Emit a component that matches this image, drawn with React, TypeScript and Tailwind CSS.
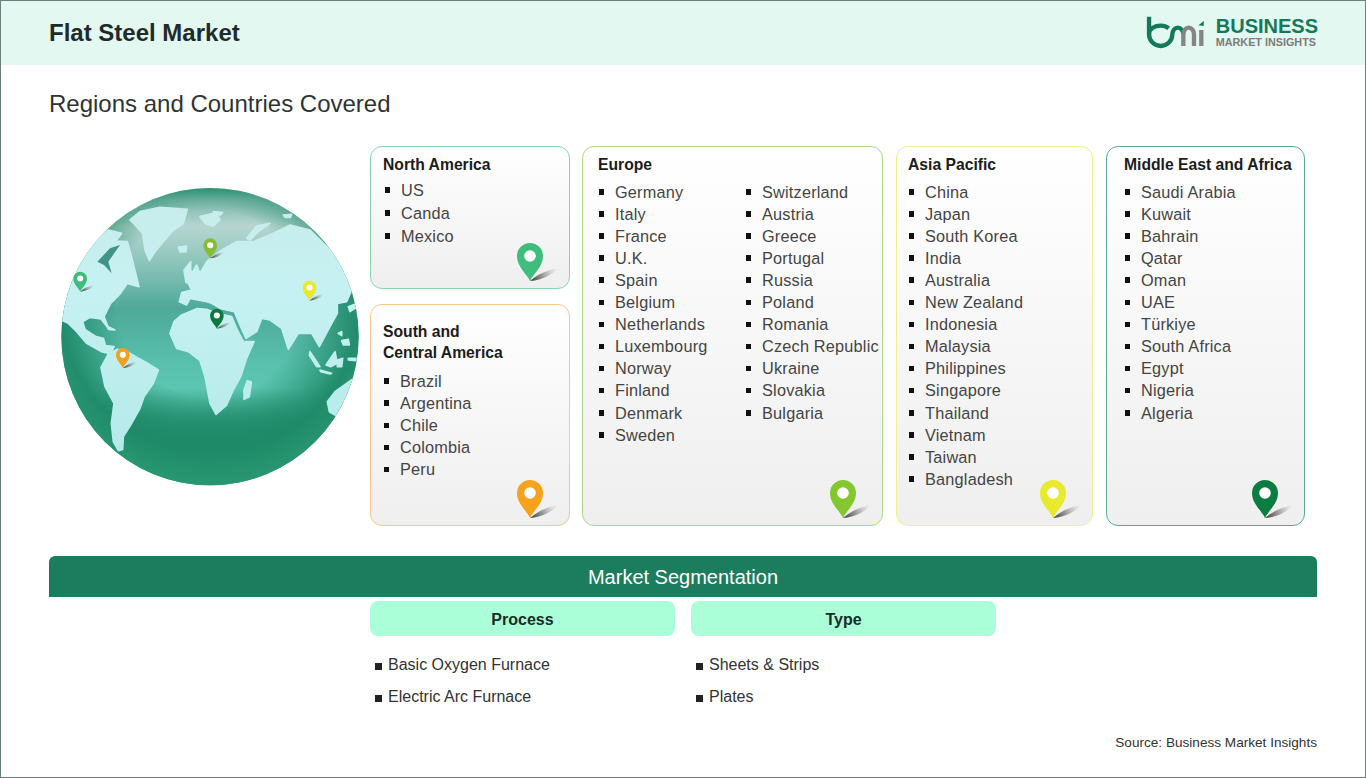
import React from "react";

function PinShape({ color, id }: { color: string; id: string }) {
  return (
    <>
      <path d="M13 38 C21 31 30 27 41 25 C36 31 26 37 13 38Z" fill={`url(#${id})`} className="blur-[0.6px]" />
      <path d="M13 38 C10 31 0 24 0 13 A13 13 0 0 1 26 13 C26 24 16 31 13 38Z" fill={color} />
      <circle cx="13" cy="13" r="5.8" fill="#fff" />
    </>
  );
}

function ShadowDef({ id }: { id: string }) {
  return (
    <linearGradient id={id} gradientUnits="userSpaceOnUse" x1="13" y1="38" x2="41" y2="25">
      <stop offset="0" stopColor="#333" />
      <stop offset="0.45" stopColor="#777" stopOpacity="0.7" />
      <stop offset="1" stopColor="#bbb" stopOpacity="0" />
    </linearGradient>
  );
}

function Pin({ color, className, id }: { color: string; className: string; id: string }) {
  return (
    <svg viewBox="0 0 44 40" className={className}>
      <defs><ShadowDef id={id} /></defs>
      <PinShape color={color} id={id} />
    </svg>
  );
}

function Card({ title, cols, pin, id, border, className, listClass, rowClass }: {
  title: React.ReactNode; cols: string[][]; pin: string; id: string; border: string; className: string; listClass: string; rowClass?: string;
}) {
  return (
    <div className={`relative rounded-[12px] border-[1.5px] bg-gradient-to-b from-white to-[#efefef] ${border} ${className}`}>
      <h3 className="text-[15.7px] leading-[21px] font-bold text-[#1c1c1c] pl-[0.5px]">{title}</h3>
      <div className={`flex ${listClass}`}>
        {cols.map((c, i) => (
          <ul key={i} className={i === 0 && cols.length > 1 ? "w-[147px]" : ""}>
            {c.map((t) => (
              <li key={t} className={`flex items-center text-[16.3px] text-[#444] tracking-[0.2px] whitespace-nowrap ${rowClass ?? "h-[22.1px]"}`}>
                <span className="w-[5.5px] h-[5.5px] bg-[#111] mr-[11px] ml-[1px] shrink-0" />
                {t}
              </li>
            ))}
          </ul>
        ))}
      </div>
      <Pin id={id} color={pin} className="absolute w-[44px] h-[40px] right-[8.5px] bottom-[5px]" />
    </div>
  );
}

function Globe() {
  const pins: [number, number, string][] = [
    [490, 205, "#86bd35"],
    [100, 305, "#3dbd7c"],
    [788, 332, "#e8e82c"],
    [510, 416, "#0d7a3d"],
    [228, 534, "#f5a01c"],
  ];
  return (
    <svg viewBox="0 0 990 990" className="w-[330px] h-[330px] shrink-0">
      <defs>
        <ShadowDef id="gs" />
        <linearGradient id="ocean" x1="0" y1="0" x2="0" y2="1">
          <stop offset="0.05" stopColor="#2f9479" />
          <stop offset="0.09" stopColor="#78b5a8" />
          <stop offset="0.17" stopColor="#b7d6d2" />
          <stop offset="0.28" stopColor="#8cc5ba" />
          <stop offset="0.42" stopColor="#4fa999" />
          <stop offset="0.58" stopColor="#58bfac" />
          <stop offset="0.66" stopColor="#5cc6b2" />
          <stop offset="0.76" stopColor="#2a9474" />
          <stop offset="0.83" stopColor="#1d8a66" />
          <stop offset="0.95" stopColor="#38ab7e" />
        </linearGradient>
        <radialGradient id="rim" gradientUnits="userSpaceOnUse" cx="510" cy="400" r="560">
          <stop offset="0.5" stopColor="#1f8a68" stopOpacity="0" />
          <stop offset="0.8" stopColor="#1f8a68" stopOpacity="0.95" />
          <stop offset="1" stopColor="#2a9a72" stopOpacity="1" />
        </radialGradient>
        <linearGradient id="land" gradientUnits="userSpaceOnUse" x1="0" y1="100" x2="0" y2="850">
          <stop offset="0" stopColor="#c8ecec" />
          <stop offset="0.35" stopColor="#c6f1f2" />
          <stop offset="1" stopColor="#b5eaea" />
        </linearGradient>
        <clipPath id="gc"><circle cx="510" cy="500" r="446" /></clipPath>
      </defs>
      <g clipPath="url(#gc)">
        <rect width="990" height="990" fill="url(#ocean)" />
        <rect width="990" height="990" fill="url(#rim)" />
        <g fill="url(#land)" stroke="url(#land)" strokeWidth="5" strokeLinejoin="round">
          {/* Greenland */}
          <path d="M270 150 L300 125 L360 112 L442 118 L430 160 L395 185 L370 215 L345 245 L328 272 L315 240 L308 190 L285 165Z" />
          {/* North America */}
          <path d="M40 440 L60 330 L120 240 L175 205 L205 180 L245 190 L228 213 L262 215 L272 250 L282 290 L297 350 L262 340 L240 372 L212 400 L192 440 L207 478 L183 447 L150 442 L128 455 L135 478 L168 500 L190 505 L197 527 L222 530 L212 552 L185 545 L140 520 L110 485 L85 460 L68 452Z" />
          {/* South America */}
          <path d="M183 592 L205 552 L232 538 L262 545 L290 562 L320 578 L355 600 L340 640 L312 680 L300 715 L272 765 L250 800 L248 838 L235 842 L220 815 L214 760 L222 700 L195 650Z" />
          {/* Africa */}
          <path d="M390 490 L402 455 L425 435 L470 416 L500 418 L530 430 L575 440 L592 480 L610 515 L642 515 L620 565 L602 620 L580 660 L560 705 L528 733 L510 700 L495 620 L480 572 L445 545 L410 535Z" />
          {/* Eurasia */}
          <path d="M418 395 L425 368 L455 360 L442 335 L470 285 L480 310 L500 275 L545 240 L590 215 L640 215 L700 190 L750 165 L810 180 L860 230 L960 330 L960 360 L935 360 L920 395 L892 400 L892 430 L870 470 L838 530 L815 490 L775 490 L745 538 L725 475 L690 450 L665 445 L650 485 L618 505 L602 470 L583 425 L540 415 L515 400 L500 395 L450 385 L440 405Z" />
          {/* Australia */}
          <path d="M862 695 L885 665 L945 622 L960 640 L950 720 L890 738 L868 725Z" />
          {/* Madagascar */}
          <path d="M622 632 L634 636 L628 680 L612 688 L612 660Z" />
          {/* Islands */}
          <path d="M415 232 L440 228 L438 245 L420 246Z" />
          <path d="M432 300 L452 275 L452 300 L462 320 L438 338Z" />
          <path d="M480 140 L530 128 L540 150 L520 168 L495 160Z" />
          <path d="M520 125 L548 128 L540 135 L522 132Z" />
          <path d="M620 205 L650 168 L690 160 L655 185 L630 210Z" />
          <path d="M730 135 L755 133 L752 142 L735 142Z" />
          <path d="M925 410 L955 398 L950 412 L930 425Z" />
          <path d="M858 585 L885 545 L892 580 L872 590Z" />
          <path d="M892 570 L908 565 L905 590 L892 590Z" />
          <path d="M905 512 L925 508 L928 525 L910 525Z" />
          <path d="M895 490 L905 485 L905 497Z" />
          <path d="M840 600 L875 610 L870 612 L842 605Z" />
          <path d="M925 565 L948 565 L948 572 L925 570Z" />
          <path d="M810 545 L840 590 L830 590 L808 555Z" />
          <path d="M205 470 L225 480 L205 478Z" />
        </g>
        {/* Hudson Bay */}
        <path d="M172 275 L210 235 L240 225 L205 275 L215 310 L192 285Z" fill="#3d9487" />
      </g>
      {pins.map(([x, y, c]) => (
        <g key={c} transform={`translate(${x} ${y}) scale(1.58)`}><PinShape color={c} id="gs" /></g>
      ))}
    </svg>
  );
}

function Logo() {
  return (
    <div className="flex items-center gap-[9.5px]">
      <svg viewBox="45 50 185 100" className="w-[61.7px] h-[33.3px]">
        <g fill="none" strokeWidth="13">
          <path d="M57 52 V105 A35 35 0 0 0 127 105 A16.5 20 0 0 1 160 105" stroke="#127a5b" />
          <path d="M57 105 C57 87 75 79 92 79 C102 79 110 82 116 87" stroke="#127a5b" />
          <path d="M160 105 V140 M160 105 A16 20 0 0 1 192 105 V140 M214 92 V140" stroke="#858585" />
          <path d="M205 78 L222 65 L221 80Z" fill="#127a5b" stroke="none" />
        </g>
      </svg>
      <div className="flex flex-col mt-[-2px]">
        <span className="text-[20px] leading-[20px] font-bold text-[#14795a]">BUSINESS</span>
        <span className="text-[10.8px] leading-[12px] font-bold text-[#7b7b7b]">MARKET INSIGHTS</span>
      </div>
    </div>
  );
}

const eu1 = ["Germany","Italy","France","U.K.","Spain","Belgium","Netherlands","Luxembourg","Norway","Finland","Denmark","Sweden"];
const eu2 = ["Switzerland","Austria","Greece","Portugal","Russia","Poland","Romania","Czech Republic","Ukraine","Slovakia","Bulgaria"];
const ap = ["China","Japan","South Korea","India","Australia","New Zealand","Indonesia","Malaysia","Philippines","Singapore","Thailand","Vietnam","Taiwan","Bangladesh"];
const me = ["Saudi Arabia","Kuwait","Bahrain","Qatar","Oman","UAE","Türkiye","South Africa","Egypt","Nigeria","Algeria"];

export default function App() {
  return (
    <div className="w-[1366px] h-[778px] border border-[#6b7f7f] bg-white flex flex-col font-['Liberation_Sans',Arial,sans-serif] overflow-hidden">
      <header className="h-[64px] shrink-0 bg-[#e3f8f0] flex items-center justify-between pl-[48px] pr-[47px]">
        <h1 className="text-[24px] font-bold text-[#1f2b2a]">Flat Steel Market</h1>
        <Logo />
      </header>
      <h2 className="ml-[48px] mt-[24px] text-[24px] leading-[30px] text-[#2f3433]">Regions and Countries Covered</h2>
      <div className="flex mt-[27px] h-[380px]">
        <div className="w-[369px] shrink-0 pl-[39px] pt-[24px]"><Globe /></div>
        <div className="flex flex-col gap-[15px] w-[200px] shrink-0">
          <Card id="p1" title="North America" cols={[["US","Canda","Mexico"]]} pin="#3fbd7d" border="border-[#86d6b4]" className="h-[143px] pl-[11.5px] pt-[6.5px]" listClass="mt-[4px] pl-[1px]" rowClass="h-[23px]" />
          <Card id="p2" title={<>South and<br />Central America</>} cols={[["Brazil","Argentina","Chile","Colombia","Peru"]]} pin="#f7a21b" border="border-[#f6c988]" className="h-[222px] pl-[11.5px] pt-[15.5px]" listClass="mt-[7.6px]" />
        </div>
        <Card id="p3" title="Europe" cols={[eu1, eu2]} pin="#84c72f" border="border-[#a9dc7c]" className="w-[301px] ml-[12px] pl-[14.5px] pt-[6.5px]" listClass="mt-[6.3px]" />
        <Card id="p4" title="Asia Pacific" cols={[ap]} pin="#e9ea2d" border="border-[#eff08f]" className="w-[197px] ml-[13px] pl-[10.5px] pt-[6.5px]" listClass="mt-[6.3px]" />
        <Card id="p5" title="Middle East and Africa" cols={[me]} pin="#0c7d40" border="border-[#5cab92]" className="w-[199px] ml-[13px] pl-[16.5px] pt-[6.5px]" listClass="mt-[6.3px]" />
      </div>
      <section className="mx-[48px] mt-[30px] h-[41px] bg-[#1b7d5e] rounded-t-[6px] flex items-center justify-center text-white text-[20px]">Market Segmentation</section>
      <div className="flex gap-[16px] ml-[369px] mt-[4px]">
        {[["Process",["Basic Oxygen Furnace","Electric Arc Furnace"]],["Type",["Sheets & Strips","Plates"]]].map(([t, items]) => (
          <div key={t as string} className="w-[305px]">
            <div className="h-[35px] pt-[2px] rounded-[8px] bg-[#aaffd9] flex items-center justify-center text-[16px] font-bold text-[#1c2b26]">{t as string}</div>
            <ul className="mt-[13px] pl-[5px]">
              {(items as string[]).map((i) => (
                <li key={i} className="h-[32px] flex items-center text-[16px] text-[#333]">
                  <span className="w-[7px] h-[7px] bg-[#222] mr-[6px] mt-[3px]" />{i}
                </li>
              ))}
            </ul>
          </div>
        ))}
      </div>
      <p className="mt-[20px] mr-[48px] text-right text-[13.6px] text-[#333]">Source: Business Market Insights</p>
    </div>
  );
}
